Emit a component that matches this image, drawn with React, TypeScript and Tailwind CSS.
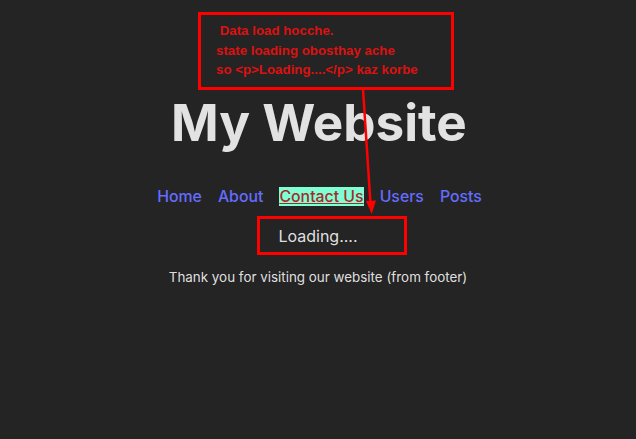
import React from "react";

export default function App() {
  const links = ["Home", "About", "Contact Us", "Users", "Posts"];
  return (
    <div
      className="relative min-h-screen w-full overflow-hidden bg-[#242424] text-center text-[rgba(255,255,255,0.87)]"
      style={{ fontFamily: "Inter, 'Liberation Sans', sans-serif" }}
    >
      <div className="pt-[94px]">
        <h1 className="pl-[2px] text-[51.2px] font-bold leading-[1.1]">My Website</h1>
        <nav className="mt-[35px] pl-[3px] text-[15.85px] font-medium leading-[24px]">
          {links.map((l) =>
            l === "Contact Us" ? (
              <a
                key={l}
                className="mx-2 bg-[#7fffd4] text-[#a52a2a] underline decoration-[#a52a2a]"
              >
                {l}
              </a>
            ) : (
              <a key={l} className="mx-2 text-[#646cff]">
                {l}
              </a>
            )
          )}
        </nav>
        <p className="mt-[15px] text-[16px] leading-[24px]">Loading....</p>
        <p className="mt-[19px] text-[13.4px] leading-[21px]">
          Thank you for visiting our website (from footer)
        </p>
      </div>

      {/* annotation box */}
      <div
        className="absolute left-[198px] top-[12px] h-[78px] w-[256px] border-[3px] border-[#ff0000] pl-[15px] pt-[6px] text-left text-[13.3px] font-bold leading-[19.5px] text-[#dd1111]"
        style={{ fontFamily: "'Liberation Sans', Arial, sans-serif" }}
      >
        <div>&nbsp;Data load hocche.</div>
        <div>state loading obosthay ache</div>
        <div>so &lt;p&gt;Loading....&lt;/p&gt; kaz korbe</div>
      </div>

      {/* arrow */}
      <svg className="absolute left-0 top-0" width="636" height="439">
        <line x1="363" y1="89" x2="370.5" y2="204" stroke="#ff0000" strokeWidth="2.5" />
        <polygon points="366,201 376,200.5 371.7,214" fill="#ff0000" />
      </svg>

      {/* loading box */}
      <div className="absolute left-[257px] top-[216px] h-[39px] w-[150px] border-[3px] border-[#ff0000]" />
    </div>
  );
}
